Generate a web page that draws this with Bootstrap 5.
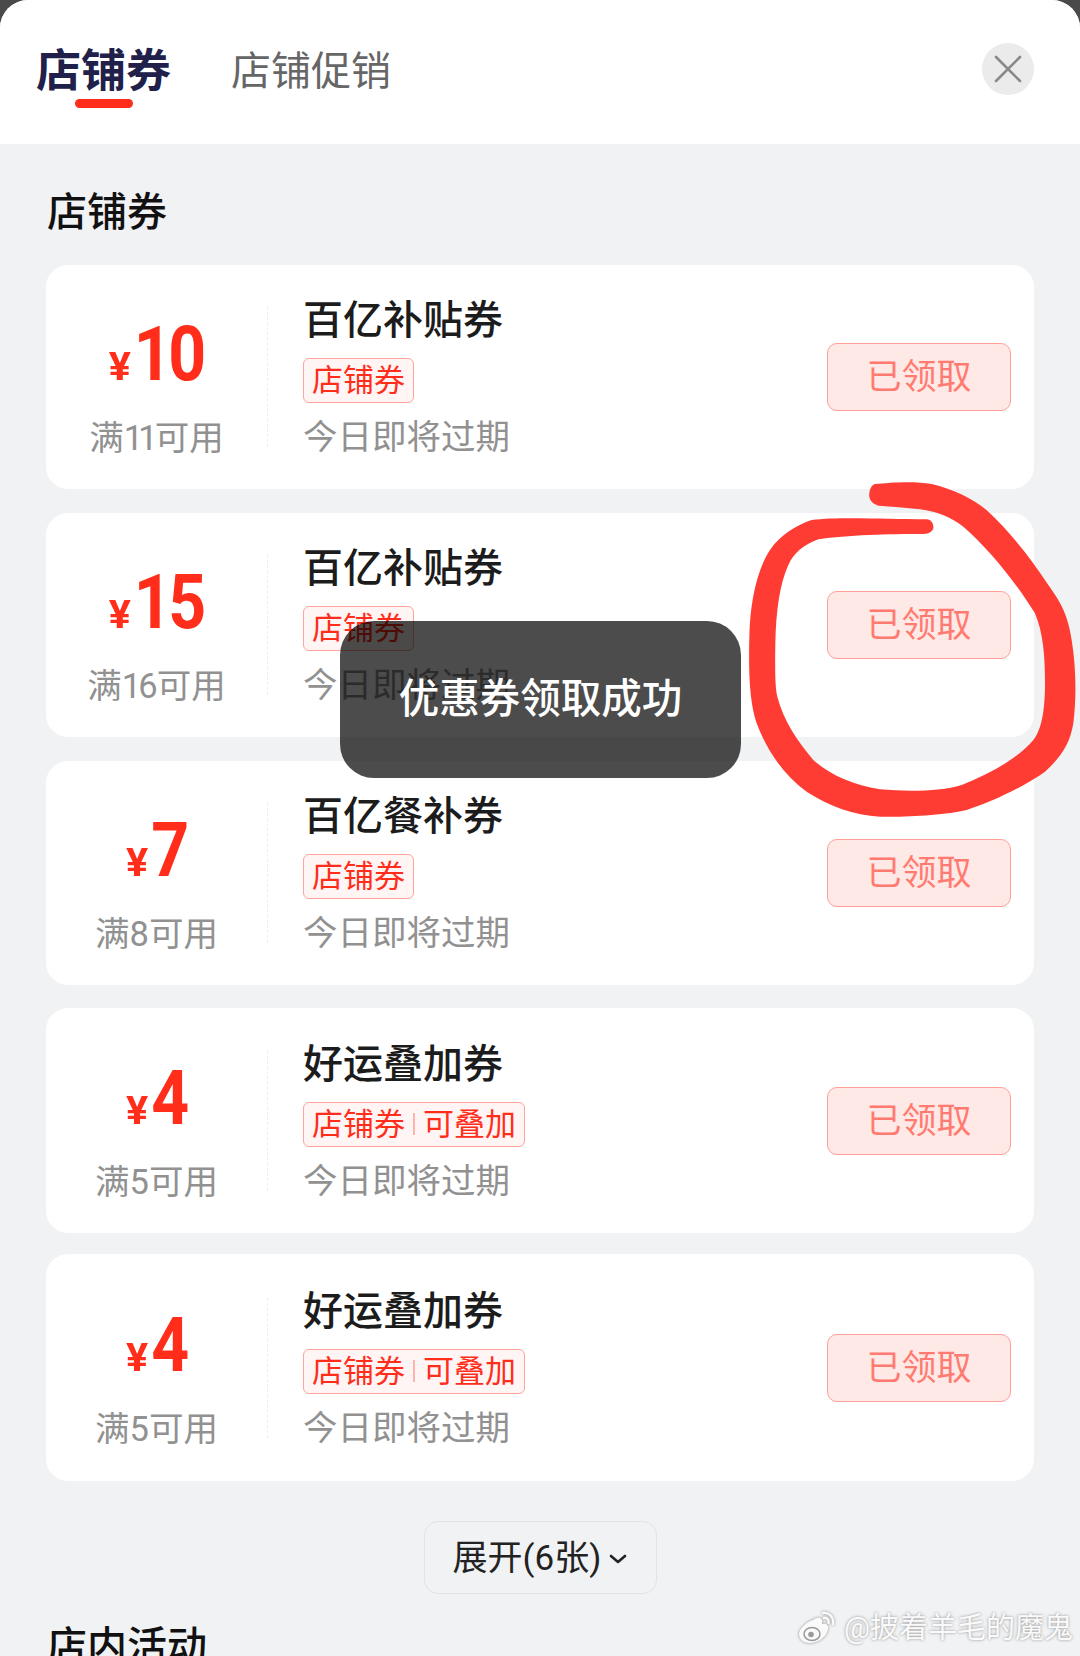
<!DOCTYPE html>
<html lang="zh-CN">
<head>
    <meta charset="UTF-8">
    <meta name="viewport" content="width=device-width, initial-scale=1.0">
    <title>店铺券</title>
    <link href="https://cdn.jsdelivr.net/npm/bootstrap@5.3.3/dist/css/bootstrap.min.css" rel="stylesheet">
    <style>
        html, body {
            height: 1656px;
            overflow: hidden;
        }
        body {
            background: #4a4a4a;
            font-family: Roboto, "Noto Sans CJK SC", sans-serif;
        }
        .sheet {
            position: relative;
            height: 1656px;
            background: #f1f2f4;
            border-radius: 28px 28px 0 0;
            overflow: hidden;
        }
        .sheet-head {
            height: 144px;
            background: #fff;
            padding: 0 46px 0 36px;
        }
        .tab-active {
            font-size: 45px;
            line-height: 54px;
            font-weight: 700;
            color: #20204a;
            padding-top: 45px;
        }
        .tab-active::after {
            content: "";
            display: block;
            width: 58px;
            height: 9px;
            margin: 0 auto;
            background: #ff2d1a;
            border-radius: 5px;
        }
        .tab-other {
            font-size: 40px;
            line-height: 54px;
            color: #666;
            margin-left: 60px;
            padding-top: 45px;
            align-self: flex-start;
        }
        .close-btn {
            width: 52px;
            height: 52px;
            background: #ebebeb;
            border-radius: 50%;
            margin-bottom: 6px;
        }
        .sheet-main {
            padding: 44px 46px 0;
        }
        .sec-title {
            font-size: 40px;
            line-height: 50px;
            font-weight: 500;
            color: #111;
            margin: 0 0 27px 1px;
        }
        .coupon {
            height: 224px;
            margin-bottom: 24px;
            border: 0;
            border-radius: 22px;
            background: #fff;
        }
        .coupon:nth-child(3) { margin-bottom: 23px; }
        .coupon:nth-child(4) { height: 225px; margin-bottom: 21px; }
        .coupon:nth-child(5) { height: 227px; margin-bottom: 0; }
        .coupon-left {
            width: 222px;
            height: 140px;
            padding-top: 20px;
            border-right: 1px dashed #eee;
            flex-shrink: 0;
        }
        .amount {
            height: 54px;
            line-height: 54px;
            color: #ff2d1a;
            font-weight: 700;
            white-space: nowrap;
            transform: scaleX(.87);
        }
        .amount-sign {
            display: inline-block;
            font-size: 38px;
            margin-right: 6px;
            transform: scaleX(1.25);
        }
        .amount-num {
            font-size: 76px;
            letter-spacing: -4px;
        }
        .amount-rule {
            font-size: 34.5px;
            line-height: 40px;
            color: #919191;
            margin-top: 37px;
            white-space: nowrap;
        }
        .rule-num {
            letter-spacing: -3px;
            margin-right: 2px;
        }
        .rule-num-ones {
            letter-spacing: -5px;
            margin-right: 2px;
        }
        .coupon-body {
            padding-left: 35px;
        }
        .coupon-name {
            font-size: 40px;
            line-height: 48px;
            font-weight: 500;
            color: #1c1c1c;
            margin-bottom: 13px;
        }
        .coupon-tag {
            height: 45px;
            padding: 0 8px;
            font-size: 31px;
            line-height: 41px;
            color: #ff2d1a;
            background: #fff5f4;
            border: 1.5px solid #ffa39b;
            border-radius: 6px;
        }
        .tag-sep {
            width: 2px;
            height: 22px;
            margin: 0 8px;
            background: #ffb3ac;
        }
        .coupon-date {
            font-size: 34.5px;
            line-height: 40px;
            color: #919191;
            margin-top: 14px;
        }
        .btn-claimed {
            width: 184px;
            height: 68px;
            margin-right: 23px;
            padding: 3px 0 0;
            font-size: 35px;
            color: #ff7a70;
            background: #ffe9e7;
            border: 1.5px solid #ff9f97;
            border-radius: 10px;
            flex-shrink: 0;
        }
        .btn-expand {
            width: 233px;
            height: 73px;
            padding: 3px 0 0;
            margin-top: 40px;
            font-size: 35px;
            color: #222;
            background: #f1f2f4;
            border: 1.5px solid #e2e3e6;
            border-radius: 14px;
        }
        .sec-title-next {
            margin-top: 28px;
        }
        .toast-box {
            position: absolute;
            left: 340px;
            top: 621px;
            width: 401px;
            height: 157px;
            background: rgba(0, 0, 0, .7);
            border-radius: 34px;
            color: #fff;
            font-size: 40.5px;
            font-weight: 500;
        }
        .ring {
            position: absolute;
            left: 740px;
            top: 470px;
            width: 340px;
            height: 360px;
        }
        .watermark {
            position: absolute;
            left: 798px;
            top: 1609px;
            color: #fafafa;
            font-size: 29px;
            line-height: 38px;
            white-space: nowrap;
            text-shadow: 0 0 3px #8d8d8d;
        }
        .watermark svg {
            filter: drop-shadow(0 0 1.5px #8d8d8d);
        }
    </style>
</head>
<body>
    <div class="sheet">
        <div class="sheet-head d-flex align-items-center">
            <div class="tab-active align-self-start">店铺券</div>
            <div class="tab-other">店铺促销</div>
            <button type="button" class="close-btn btn p-0 border-0 ms-auto d-flex align-items-center justify-content-center" aria-label="关闭">
                <svg width="28" height="28" viewBox="0 0 28 28"><path d="M2 2 L26 26 M26 2 L2 26" stroke="#888" stroke-width="2.6" stroke-linecap="round" fill="none"/></svg>
            </button>
        </div>

        <div class="sheet-main">
            <h2 class="sec-title">店铺券</h2>

            <div class="coupon-list">
                <div class="coupon card flex-row align-items-center">
                    <div class="coupon-left d-flex flex-column align-items-center">
                        <div class="amount"><span class="amount-sign">¥</span><span class="amount-num">10</span></div>
                        <div class="amount-rule">满<span class="rule-num-ones">11</span>可用</div>
                    </div>
                    <div class="coupon-body flex-grow-1">
                        <div class="coupon-name">百亿补贴券</div>
                        <div class="coupon-tag d-inline-flex align-items-center">店铺券</div>
                        <div class="coupon-date">今日即将过期</div>
                    </div>
                    <button type="button" class="btn btn-claimed">已领取</button>
                </div>

                <div class="coupon card flex-row align-items-center">
                    <div class="coupon-left d-flex flex-column align-items-center">
                        <div class="amount"><span class="amount-sign">¥</span><span class="amount-num">15</span></div>
                        <div class="amount-rule">满<span class="rule-num">16</span>可用</div>
                    </div>
                    <div class="coupon-body flex-grow-1">
                        <div class="coupon-name">百亿补贴券</div>
                        <div class="coupon-tag d-inline-flex align-items-center">店铺券</div>
                        <div class="coupon-date">今日即将过期</div>
                    </div>
                    <button type="button" class="btn btn-claimed">已领取</button>
                </div>

                <div class="coupon card flex-row align-items-center">
                    <div class="coupon-left d-flex flex-column align-items-center">
                        <div class="amount"><span class="amount-sign">¥</span><span class="amount-num">7</span></div>
                        <div class="amount-rule">满8可用</div>
                    </div>
                    <div class="coupon-body flex-grow-1">
                        <div class="coupon-name">百亿餐补券</div>
                        <div class="coupon-tag d-inline-flex align-items-center">店铺券</div>
                        <div class="coupon-date">今日即将过期</div>
                    </div>
                    <button type="button" class="btn btn-claimed">已领取</button>
                </div>

                <div class="coupon card flex-row align-items-center">
                    <div class="coupon-left d-flex flex-column align-items-center">
                        <div class="amount"><span class="amount-sign">¥</span><span class="amount-num">4</span></div>
                        <div class="amount-rule">满5可用</div>
                    </div>
                    <div class="coupon-body flex-grow-1">
                        <div class="coupon-name">好运叠加券</div>
                        <div class="coupon-tag d-inline-flex align-items-center">店铺券<span class="tag-sep"></span>可叠加</div>
                        <div class="coupon-date">今日即将过期</div>
                    </div>
                    <button type="button" class="btn btn-claimed">已领取</button>
                </div>

                <div class="coupon card flex-row align-items-center">
                    <div class="coupon-left d-flex flex-column align-items-center">
                        <div class="amount"><span class="amount-sign">¥</span><span class="amount-num">4</span></div>
                        <div class="amount-rule">满5可用</div>
                    </div>
                    <div class="coupon-body flex-grow-1">
                        <div class="coupon-name">好运叠加券</div>
                        <div class="coupon-tag d-inline-flex align-items-center">店铺券<span class="tag-sep"></span>可叠加</div>
                        <div class="coupon-date">今日即将过期</div>
                    </div>
                    <button type="button" class="btn btn-claimed">已领取</button>
                </div>
            </div>

            <div class="d-flex justify-content-center">
                <button type="button" class="btn btn-expand d-flex align-items-center justify-content-center gap-2">
                    展开(6张)
                    <svg width="18" height="10" viewBox="0 0 18 10"><path d="M2 2 L9 8 L16 2" stroke="#222" stroke-width="2.6" stroke-linecap="round" stroke-linejoin="round" fill="none"/></svg>
                </button>
            </div>

            <h2 class="sec-title sec-title-next">店内活动</h2>
        </div>

        <div class="toast-box d-flex align-items-center justify-content-center">优惠券领取成功</div>

        <svg class="ring" viewBox="0 0 1020 1080">
            <path fill="#ff3c34" d="M405 42 C450 38 520 32 575 42 C640 58 700 85 745 125 C800 175 870 260 925 345 C965 400 985 440 995 510 C1008 590 1010 680 1000 760 C990 820 965 860 915 905 C860 945 760 995 680 1020 C620 1035 500 1042 420 1040 C340 1035 270 1010 200 965 C130 915 80 840 50 760 C30 700 25 620 28 500 C30 400 50 300 90 240 C120 195 170 165 215 150 C300 140 440 148 560 148 C575 148 582 165 580 175 C575 190 560 192 545 192 C450 192 320 195 235 208 C190 225 160 250 145 285 C120 340 108 420 106 520 C105 600 105 650 112 680 C130 750 170 810 220 870 C270 915 340 945 420 958 C500 965 600 965 665 945 C740 915 830 870 880 810 C905 780 915 720 915 640 C915 560 910 490 885 430 C830 340 750 240 670 170 C630 140 590 125 540 118 C500 112 450 110 415 107 C395 102 385 85 388 70 C390 55 395 45 405 42 Z"/>
        </svg>

        <div class="watermark d-flex align-items-center gap-2">
            <svg width="38" height="34" viewBox="0 0 38 34">
                <path fill="#fafafa" d="M15 9 C19 6 23 6 24 9 C24.500 11 24 12 24 13 C28 12 31 14 30 18 C29 25 21 32 12 32 C5 32 1 28 1 23 C1 18 8 11 15 9 Z"/>
                <ellipse cx="14" cy="23" rx="8" ry="6.500" fill="none" stroke="#9a9a9a" stroke-width="1.500"/>
                <circle cx="13" cy="23.500" r="2.800" fill="#9a9a9a"/>
                <path d="M25 2 C31 1 36 6 35 13 M26 7 C29 6 31 9 30.500 12" stroke="#fafafa" stroke-width="2.400" stroke-linecap="round" fill="none"/>
            </svg>
            <span>@披着羊毛的魔鬼</span>
        </div>
    </div>

    <script src="https://cdn.jsdelivr.net/npm/bootstrap@5.3.3/dist/js/bootstrap.bundle.min.js"></script>
</body>
</html>
